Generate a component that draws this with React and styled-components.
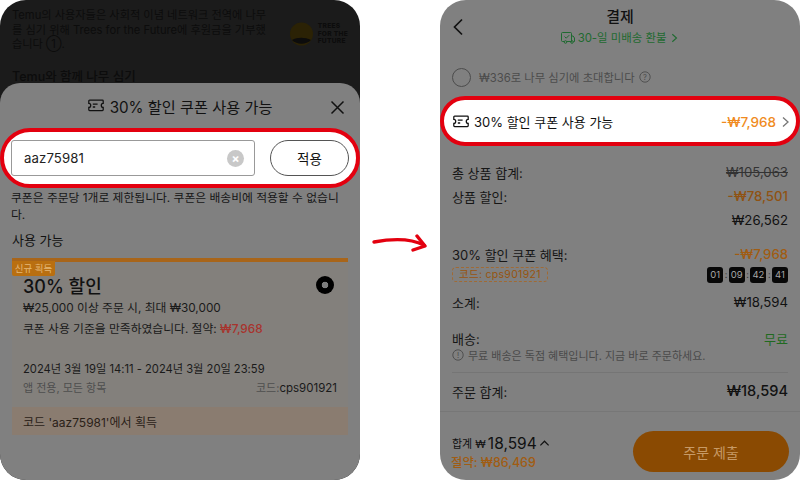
import React from 'react';
import styled, { createGlobalStyle } from 'styled-components';

const GlobalStyle = createGlobalStyle`
  html, body { margin: 0; padding: 0; background: #fff; }
  body { font-family: Inter, "Noto Sans CJK KR", sans-serif; color: #111; }
  * { box-sizing: border-box; }
`;

const Page = styled.div`
  width: 800px;
  height: 480px;
  background: #fff;
  display: flex;
  justify-content: space-between;
  align-items: stretch;
  overflow: hidden;
`;

const Phone = styled.section`
  width: 360px;
  height: 480px;
  border-radius: 26px;
  overflow: hidden;
  display: flex;
  flex-direction: column;
  background: ${(p) => p.$bg};
`;

const Behind = styled.div`
  height: 83px;
  flex: none;
  padding: 8px 12px 0;
  color: #0c0c0c;
  overflow: hidden;
`;

const BehindTop = styled.div`
  display: flex;
  justify-content: space-between;
`;

const BehindText = styled.p`
  margin: 0;
  width: 270px;
  font-size: 11.2px;
  line-height: 14.5px;
  white-space: nowrap;
`;

const TreeLogo = styled.div`
  display: flex;
  align-items: center;
  gap: 5px;
  margin-top: 9px;
  font-size: 6.6px;
  font-weight: 800;
  line-height: 7.4px;
  letter-spacing: 0.3px;
  color: #0c0c0c;
`;

const BehindTitle = styled.h3`
  margin: 17px 0 0;
  font-size: 12.5px;
  line-height: 16px;
  font-weight: 500;
`;

const Sheet = styled.div`
  flex: 1;
  background: #808080;
  border-radius: 20px 20px 0 0;
  display: flex;
  flex-direction: column;
`;

const SheetHeader = styled.header`
  height: 45px;
  flex: none;
  display: flex;
  align-items: center;
  justify-content: center;
  gap: 6px;
  position: relative;
  font-size: 15.2px;
  font-weight: 400;
  color: #111;
`;

const CloseButton = styled.span`
  position: absolute;
  right: 15px;
  top: 17px;
  display: flex;
`;

const Highlight = styled.div`
  background: #fff;
  border: 4px solid #e3000f;
  display: flex;
  align-items: center;
  flex: none;
  height: ${(p) => p.$height}px;
  border-radius: ${(p) => p.$height / 2}px;
  padding: ${(p) => p.$padding};
`;

const CodeInput = styled.div`
  width: 244px;
  height: 36px;
  border: 1px solid #999;
  border-radius: 3px;
  display: flex;
  align-items: center;
  justify-content: space-between;
  padding: 0 10px 0 12px;
  font-size: 13.2px;
  letter-spacing: 0.1px;
  color: #222;
`;

const ClearIcon = styled.span`
  width: 17px;
  height: 17px;
  border-radius: 50%;
  background: #c8c8c8;
  color: #fff;
  font-size: 12px;
  font-weight: 700;
  line-height: 17px;
  text-align: center;
`;

const ApplyButton = styled.div`
  width: 79px;
  height: 36px;
  margin-left: 15px;
  border: 1px solid #555;
  border-radius: 18px;
  display: flex;
  align-items: center;
  justify-content: center;
  font-size: 13.5px;
  color: #111;
`;

const Note = styled.p`
  margin: 2px 12px 0 11px;
  font-size: 11.8px;
  line-height: 17px;
  height: 34px;
  color: #161616;
`;

const SectionTitle = styled.h4`
  margin: 8px 12px 0;
  height: 26px;
  font-size: 13px;
  font-weight: 400;
  line-height: 17px;
  color: #111;
`;

const Coupon = styled.article`
  margin: 0 12px;
  border-top: 4px solid #a8651a;
  background: #83807c;
  position: relative;
  display: flex;
  flex-direction: column;
`;

const NewTag = styled.span`
  position: absolute;
  left: 0;
  top: -1px;
  width: 43px;
  height: 15px;
  background: #b96f10;
  border-radius: 0 0 2px 2px;
  color: #e5b878;
  font-size: 9.5px;
  line-height: 15px;
  text-align: center;
`;

const CouponBody = styled.div`
  padding: 11px 11px 0;
  display: flex;
  flex-direction: column;
  height: 145px;
`;

const CouponHead = styled.div`
  display: flex;
  align-items: center;
  justify-content: space-between;
  height: 24px;
  padding-right: 3px;
`;

const CouponName = styled.strong`
  font-size: 18px;
  font-weight: 500;
  color: #111;
`;

const Radio = styled.span`
  width: 18px;
  height: 18px;
  border-radius: 50%;
  background: radial-gradient(circle, #7d7d7d 0 3px, #000 3.6px);
`;

const CouponLine = styled.div`
  display: flex;
  justify-content: space-between;
  font-size: ${(p) => p.$size || 12}px;
  color: ${(p) => p.$color || '#1a1a1a'};
  height: ${(p) => p.$height || 20}px;
  line-height: ${(p) => p.$height || 20}px;
  margin-top: ${(p) => p.$top || 0}px;
`;

const Saved = styled.span`
  color: #a8332d;
  font-weight: 500;
`;

const Dark = styled.span`
  color: #1a1a1a;
  font-size: 11.5px;
`;

const CouponFoot = styled.div`
  height: 28px;
  padding: 0 11px;
  background: #8a7c70;
  display: flex;
  align-items: center;
  font-size: 12px;
  color: #2a2118;
`;

const Arrow = styled.svg`
  align-self: center;
  flex: none;
`;

const CheckoutHeader = styled.header`
  height: 58px;
  flex: none;
  display: flex;
  flex-direction: column;
  align-items: center;
  padding-top: 7px;
  position: relative;
`;

const BackIcon = styled.span`
  position: absolute;
  left: 12px;
  top: 17px;
  display: flex;
`;

const HeaderTitle = styled.h1`
  margin: 0;
  font-size: 15px;
  line-height: 20px;
  font-weight: 500;
  color: #111;
`;

const ReturnNote = styled.div`
  display: flex;
  align-items: center;
  gap: 3px;
  margin-top: 2px;
  font-size: 11.4px;
  line-height: 18px;
  color: #1f6a30;
`;

const TreeRow = styled.div`
  height: 38px;
  flex: none;
  display: flex;
  align-items: center;
  padding: 0 12px;
  gap: 8px;
  font-size: 11.3px;
  color: #4c4c4c;
`;

const EmptyRadio = styled.span`
  width: 19px;
  height: 19px;
  border: 1px solid #4c4c4c;
  border-radius: 50%;
`;

const HelpIcon = styled.span`
  display: flex;
  margin-left: -4px;
`;

const CouponText = styled.span`
  font-size: 13px;
  color: #111;
  margin-left: 5px;
  flex: 1;
`;

const CouponAmount = styled.span`
  font-size: 13.5px;
  font-weight: 500;
  color: #f08a20;
  margin-right: 3px;
`;

const Summary = styled.div`
  flex: 1;
  padding: 14px 12px 0;
  display: flex;
  flex-direction: column;
`;

const SummaryRow = styled.div`
  display: flex;
  justify-content: space-between;
  align-items: center;
  flex: none;
  height: ${(p) => p.$height || 24}px;
  margin-top: ${(p) => p.$top || 0}px;
  font-size: 13px;
  color: #161616;
`;

const Amount = styled.span`
  font-size: ${(p) => p.$size || 13.2}px;
  font-weight: ${(p) => p.$weight || 400};
  color: ${(p) => p.$color || '#111'};
  text-decoration: ${(p) => (p.$struck ? 'line-through' : 'none')};
`;

const CodeChip = styled.span`
  border: 1px dashed #a06a34;
  border-radius: 4px;
  padding: 0 6px;
  height: 15px;
  line-height: 14px;
  font-size: 10.5px;
  color: #97540f;
  letter-spacing: 0.3px;
`;

const Timer = styled.div`
  display: flex;
  align-items: center;
  gap: 1.5px;
  font-size: 9px;
  color: #333;
`;

const TimerCell = styled.span`
  width: 16px;
  height: 16px;
  background: #080808;
  border-radius: 3px;
  color: #a6a6a6;
  text-align: center;
  line-height: 16px;
  font-size: 9.5px;
`;

const FreeNote = styled.div`
  display: flex;
  align-items: center;
  gap: 4px;
  height: 14px;
  font-size: 11px;
  color: #4a4a4a;
`;

const Divider = styled.hr`
  margin: ${(p) => p.$margin};
  border: 0;
  border-top: 1px solid #757575;
  flex: none;
`;

const Footer = styled.footer`
  height: 69px;
  flex: none;
  border-top: 1px solid #777;
  padding: 0 11px 8px 12px;
  display: flex;
  align-items: flex-end;
  justify-content: space-between;
`;

const TotalBlock = styled.div`
  display: flex;
  flex-direction: column;
`;

const TotalLine = styled.div`
  display: flex;
  align-items: center;
  gap: 2px;
  height: 22px;
  font-size: 11px;
  color: #111;
`;

const TotalAmount = styled.strong`
  font-size: 15.5px;
  font-weight: 400;
`;

const SavedTotal = styled.div`
  height: 18px;
  margin-left: -1px;
  font-size: 12.4px;
  line-height: 18px;
  font-weight: 500;
  color: #a05c12;
`;

const SubmitButton = styled.div`
  width: 156px;
  height: 41px;
  border-radius: 21px;
  background: #8a4a02;
  color: #c79a66;
  font-size: 14px;
  display: flex;
  align-items: center;
  justify-content: center;
`;

const Ticket = ({ size = 16 }) => (
  <svg width={size} height={size * 0.8} viewBox="0 0 20 16" fill="none" stroke="#111" strokeWidth="1.6">
    <path d="M2 1.5h16a1 1 0 0 1 1 1V5.6a2.4 2.4 0 0 0 0 4.8v3.1a1 1 0 0 1-1 1H2a1 1 0 0 1-1-1v-3.1a2.4 2.4 0 0 0 0-4.8V2.5a1 1 0 0 1 1-1z" />
    <path d="M6 6.5h6M6 10h3" />
  </svg>
);

const Chevron = ({ dir = 'right', size = 12, color = '#777', stroke = 1.3 }) => {
  const paths = {
    right: 'M4 1.5 9 6l-5 4.5',
    left: 'M8 1.5 3 6l5 4.5',
    up: 'M1.5 8 6 3.5 10.5 8',
  };
  return (
    <svg width={size} height={size} viewBox="0 0 12 12" fill="none" stroke={color} strokeWidth={stroke}>
      <path d={paths[dir]} />
    </svg>
  );
};

const Info = ({ glyph, color }) => (
  <svg width="12" height="12" viewBox="0 0 12 12" fill="none" stroke={color} strokeWidth="0.9">
    <circle cx="6" cy="6" r="5.2" />
    <text x="6" y="8.7" textAnchor="middle" fontSize="7.5" stroke="none" fill={color}>{glyph}</text>
  </svg>
);

const Truck = () => (
  <svg width="14" height="12" viewBox="0 0 14 12" fill="none" stroke="#1f6a30" strokeWidth="1">
    <path d="M3 9.5H1.5a1 1 0 0 1-1-1v-7a1 1 0 0 1 1-1h8a1 1 0 0 1 1 1v8H6" />
    <path d="M10.5 4h1.6l1.4 2v3.5h-1" />
    <circle cx="4.5" cy="10" r="1.3" />
    <circle cx="11" cy="10" r="1.3" />
    <path d="m3.5 4.5 1.7 1.7 3-3" />
  </svg>
);

const LeftPhone = () => (
  <Phone $bg="#1b1b1b">
    <Behind>
      <BehindTop>
        <BehindText>
          Temu의 사용자들은 사회적 이념 네트워크 전역에 나무<br />
          를 심기 위해 Trees for the Future에 후원금을 기부했<br />
          습니다 ①.
        </BehindText>
        <TreeLogo>
          <svg width="23" height="24" viewBox="0 0 23 24">
            <circle cx="11.5" cy="12" r="11.5" fill="#2b2205" />
            <path d="M2 18c5-3 13-3 19 0-5 5-14 5-19 0z" fill="#0c0c0c" />
          </svg>
          <span>TREES<br />FOR THE<br />FUTURE</span>
        </TreeLogo>
      </BehindTop>
      <BehindTitle>Temu와 함께 나무 심기</BehindTitle>
    </Behind>
    <Sheet>
      <SheetHeader>
        <Ticket />
        30% 할인 쿠폰 사용 가능
        <CloseButton>
          <svg width="15" height="15" viewBox="0 0 15 15" stroke="#111" strokeWidth="1.5">
            <path d="M1.5 1.5l12 12M13.5 1.5l-12 12" />
          </svg>
        </CloseButton>
      </SheetHeader>
      <Highlight $height={60} $padding="0 7px">
        <CodeInput>
          aaz75981
          <ClearIcon>×</ClearIcon>
        </CodeInput>
        <ApplyButton>적용</ApplyButton>
      </Highlight>
      <Note>쿠폰은 주문당 1개로 제한됩니다. 쿠폰은 배송비에 적용할 수 없습니다.</Note>
      <SectionTitle>사용 가능</SectionTitle>
      <Coupon>
        <NewTag>신규 획득</NewTag>
        <CouponBody>
          <CouponHead>
            <CouponName>30% 할인</CouponName>
            <Radio />
          </CouponHead>
          <CouponLine $size={11.8} $top={1}>₩25,000 이상 주문 시, 최대 ₩30,000</CouponLine>
          <CouponLine $size={11.8} $top={1}>
            <span>쿠폰 사용 기준을 만족하였습니다. 절약: <Saved>₩7,968</Saved></span>
          </CouponLine>
          <CouponLine $size={11.2} $top={20}>2024년 3월 19일 14:11 - 2024년 3월 20일 23:59</CouponLine>
          <CouponLine $size={11} $color="#4e4e4e" $top={-1}>
            <span>앱 전용, 모든 항목</span>
            <span>코드:<Dark>cps901921</Dark></span>
          </CouponLine>
        </CouponBody>
        <CouponFoot>코드 'aaz75981'에서 획득</CouponFoot>
      </Coupon>
    </Sheet>
  </Phone>
);

const RightPhone = () => (
  <Phone $bg="#808080">
    <CheckoutHeader>
      <BackIcon>
        <svg width="14" height="20" viewBox="0 0 14 20" fill="none" stroke="#111" strokeWidth="1.7">
          <path d="M10 2.5 2.5 10l7.5 7.5" />
        </svg>
      </BackIcon>
      <HeaderTitle>결제</HeaderTitle>
      <ReturnNote>
        <Truck />
        30-일 미배송 환불
        <Chevron color="#1f6a30" size={10} />
      </ReturnNote>
    </CheckoutHeader>
    <TreeRow>
      <EmptyRadio />
      <span>₩336로 나무 심기에 초대합니다</span>
      <HelpIcon>
        <Info glyph="?" color="#4c4c4c" />
      </HelpIcon>
    </TreeRow>
    <Highlight $height={50} $padding="1px 5px 0 9px">
      <Ticket />
      <CouponText>30% 할인 쿠폰 사용 가능</CouponText>
      <CouponAmount>-₩7,968</CouponAmount>
      <Chevron />
    </Highlight>
    <Summary>
      <SummaryRow>
        총 상품 합계:
        <Amount $struck $color="#333">₩105,063</Amount>
      </SummaryRow>
      <SummaryRow>
        상품 할인:
        <Amount $color="#8f5212" $weight={500}>-₩78,501</Amount>
      </SummaryRow>
      <SummaryRow>
        <span />
        <Amount>₩26,562</Amount>
      </SummaryRow>
      <SummaryRow $top={10}>
        30% 할인 쿠폰 혜택:
        <Amount $color="#a05c12" $weight={500}>-₩7,968</Amount>
      </SummaryRow>
      <SummaryRow $height={17}>
        <CodeChip>코드: cps901921</CodeChip>
        <Timer>
          <TimerCell>01</TimerCell>:<TimerCell>09</TimerCell>:<TimerCell>42</TimerCell>:<TimerCell>41</TimerCell>
        </Timer>
      </SummaryRow>
      <SummaryRow $top={7}>
        소계:
        <Amount>₩18,594</Amount>
      </SummaryRow>
      <SummaryRow $top={14} $height={20}>
        배송:
        <Amount $color="#1f6a1f" $size={13}>무료</Amount>
      </SummaryRow>
      <FreeNote>
        <Info glyph="!" color="#4a4a4a" />
        무료 배송은 독점 혜택입니다. 지금 바로 주문하세요.
      </FreeNote>
      <Divider $margin="10px 0 0" />
      <SummaryRow $top={6}>
        주문 합계:
        <Amount $size={14.6} $weight={500}>₩18,594</Amount>
      </SummaryRow>
    </Summary>
    <Footer>
      <TotalBlock>
        <TotalLine>
          합계 ₩<TotalAmount>18,594</TotalAmount>
          <Chevron dir="up" size={11} color="#111" />
        </TotalLine>
        <SavedTotal>절약: ₩86,469</SavedTotal>
      </TotalBlock>
      <SubmitButton>주문 제출</SubmitButton>
    </Footer>
  </Phone>
);

const App = () => (
  <>
    <GlobalStyle />
    <Page>
      <LeftPhone />
      <Arrow width="56" height="24" viewBox="0 0 56 24" fill="none" stroke="#e3000f" strokeWidth="3.4" strokeLinecap="round" strokeLinejoin="round">
        <path d="M2 14C18 11 38 10 52 17" />
        <path d="M45 8l8 10-12 4" />
      </Arrow>
      <RightPhone />
    </Page>
  </>
);

export default App;
